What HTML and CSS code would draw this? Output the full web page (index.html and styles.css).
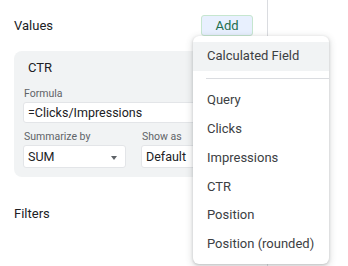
FILE: index.html
```html
<!DOCTYPE html>
<html lang="en">
<head>
  <meta charset="UTF-8">
  <title>Values editor</title>
  <link rel="stylesheet" href="styles.css">
</head>
<body>
  <div class="panel">
    <div class="head">
      <span class="title">Values</span>
      <button class="add">Add</button>
    </div>

    <div class="card">
      <div class="card-title">CTR</div>
      <div class="label">Formula</div>
      <div class="input">=Clicks/Impressions</div>
      <div class="row">
        <div class="field">
          <div class="label">Summarize by</div>
          <div class="select sum">SUM <span class="arrow"></span></div>
        </div>
        <div class="field">
          <div class="label">Show as</div>
          <div class="select">Default</div>
        </div>
      </div>
    </div>

    <div class="title filters">Filters</div>
  </div>

  <div class="menu">
    <div class="item active">Calculated Field</div>
    <div class="sep"></div>
    <div class="item">Query</div>
    <div class="item">Clicks</div>
    <div class="item">Impressions</div>
    <div class="item">CTR</div>
    <div class="item">Position</div>
    <div class="item">Position (rounded)</div>
  </div>
</body>
</html>
```

FILE: styles.css
```css
body {
  margin: 0;
  font-family: Roboto, "Liberation Sans", sans-serif;
  color: #202124;
  background: #fff;
  overflow: hidden;
}
.panel {
  width: 268px;
  height: 266px;
  padding: 15px 14px 0 14px;
  border-right: 1px solid #dadce0;
  box-sizing: border-box;
}
.head {
  display: flex;
  justify-content: space-between;
  align-items: center;
  height: 21px;
}
.title {
  font-size: 13px;
}
.add {
  width: 52px;
  height: 21px;
  padding: 0;
  font-family: inherit;
  font-size: 13px;
  color: #1e6e4e;
  background: #e8f0fe;
  border: 1px solid #c6e6cf;
  border-radius: 3px;
}
.card {
  margin-top: 15px;
  height: 126px;
  padding: 9px 0 0 9px;
  background: #f1f3f4;
  border-radius: 8px;
  box-sizing: border-box;
}
.card-title {
  font-size: 13px;
  padding-left: 5px;
  line-height: 15px;
}
.label {
  font-size: 10.5px;
  color: #5f6368;
  line-height: 12px;
  padding-left: 1px;
}
.card > .label {
  margin-top: 13px;
}
.input {
  margin-top: 2px;
  height: 21px;
  line-height: 20px;
  padding-left: 4px;
  font-size: 12.5px;
  background: #fff;
  border: 1px solid #e3e5e8;
  border-radius: 3px;
  box-sizing: border-box;
}
.row {
  display: flex;
  gap: 15px;
  margin-top: 8px;
}
.select {
  position: relative;
  margin-top: 2px;
  width: 103px;
  height: 23px;
  line-height: 22px;
  padding-left: 4px;
  font-size: 12.5px;
  background: #fff;
  border: 1px solid #e3e5e8;
  border-radius: 3px;
  box-sizing: border-box;
}
.arrow {
  position: absolute;
  right: 8px;
  top: 10px;
  border-left: 3.5px solid transparent;
  border-right: 3.5px solid transparent;
  border-top: 4px solid #5f6368;
}
.filters {
  margin-top: 29px;
}
.menu {
  position: absolute;
  left: 193px;
  top: 36px;
  width: 136px;
  height: 228px;
  padding-top: 6px;
  background: #fff;
  border-radius: 6px;
  box-shadow: 0 1px 3px rgba(60, 64, 67, 0.25), 0 2px 6px 2px rgba(60, 64, 67, 0.12);
  box-sizing: border-box;
}
.item {
  height: 28.9px;
  line-height: 28.9px;
  padding-left: 14px;
  font-size: 13px;
  color: #3c4043;
  white-space: nowrap;
}
.item.active {
  background: #f1f3f4;
}
.sep {
  height: 1px;
  margin: 7px 0 7px 13px;
  background: #dadce0;
}
```
